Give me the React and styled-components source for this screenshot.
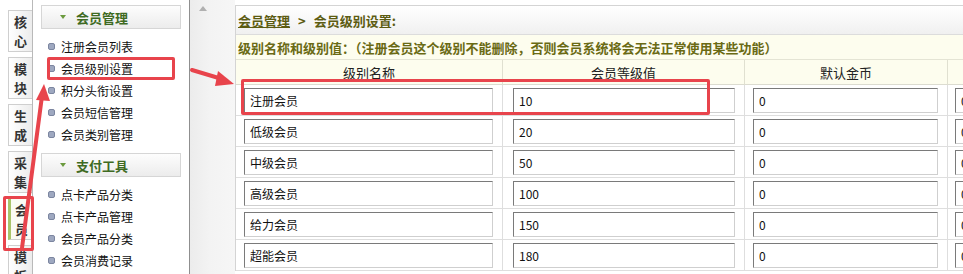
import React from 'react';
import styled, { createGlobalStyle } from 'styled-components';

const GlobalStyle = createGlobalStyle`
  html, body {
    margin: 0;
    padding: 0;
    background: #fff;
  }
  body {
    font-family: "Liberation Sans", "Noto Sans CJK SC", sans-serif;
    font-size: 12px;
    color: #000;
  }
`;

const Page = styled.div`
  position: relative;
  width: 963px;
  height: 274px;
  overflow: hidden;
  display: flex;
  background: #fff;
`;

const TabStrip = styled.div`
  width: 33px;
  flex: none;
  border-right: 1px solid #b9b9b9;
  padding: 10px 0 0 8px;
  box-sizing: border-box;
  display: flex;
  flex-direction: column;
  gap: 5px;
  background: #fff;
`;

const Tab = styled.div`
  position: relative;
  width: 24px;
  height: 42px;
  box-sizing: border-box;
  border: 1px solid #cfcfcf;
  border-right: none;
  background: ${p => (p.$active ? '#fbfbf4' : 'linear-gradient(to right, #fff, #ececec)')};
  border-left: ${p => (p.$active ? '3px solid #a9c46a' : '1px solid #cfcfcf')};
  display: flex;
  flex-direction: column;
  align-items: center;
  justify-content: center;
  font-family: "Noto Sans CJK SC", sans-serif;
  font-size: 13px;
  font-weight: bold;
  color: #333;
  flex: none;

  span {
    display: block;
    height: 19px;
    line-height: 19px;
  }
`;

const MenuPanel = styled.div`
  width: 157px;
  flex: none;
  border-right: 1px solid #8f8f8f;
  padding: 5px 0 0 8px;
  box-sizing: border-box;
`;

const GroupHeader = styled.div`
  width: 140px;
  height: 24px;
  box-sizing: border-box;
  border: 1px solid #d6d6d6;
  background: linear-gradient(to bottom, #fdfdfd, #ececec);
  display: flex;
  align-items: center;
  padding-left: 18px;
  gap: 10px;
  font-family: "Noto Sans CJK SC", sans-serif;
  font-size: 13px;
  font-weight: bold;
  color: #3e6a22;
  margin-bottom: 6px;
`;

const Caret = styled.span`
  width: 0;
  height: 0;
  border-left: 3px solid transparent;
  border-right: 3px solid transparent;
  border-top: 4px solid #6b9a3e;
`;

const MenuList = styled.div`
  display: flex;
  flex-direction: column;
  margin-bottom: 8px;
`;

const MenuItem = styled.div`
  height: 22px;
  display: flex;
  align-items: center;
  gap: 6px;
  padding-left: 7px;
  font-family: "Noto Sans CJK SC", sans-serif;
  font-size: 12px;
  color: #111;
`;

const Bullet = styled.span`
  width: 5px;
  height: 5px;
  border-radius: 2px;
  background: #9ea8c0;
  border: 1px solid #7c86a0;
`;

const Gutter = styled.div`
  width: 45px;
  flex: none;
  background: linear-gradient(to right, #ececec 0, #f3f3f3 20px, #f6f6f6 100%);
  padding: 6px 0 0 9px;
  box-sizing: border-box;
`;

const UpArrow = styled.div`
  width: 0;
  height: 0;
  border-left: 4px solid transparent;
  border-right: 4px solid transparent;
  border-bottom: 5px solid #b0b0b0;
`;

const Main = styled.div`
  flex: 1;
  padding-top: 5px;
  min-width: 0;
`;

const Box = styled.div`
  border-top: 1px solid #d4d4d4;
  border-left: 1px solid #d4d4d4;
  width: 900px;
`;

const Crumb = styled.div`
  height: 28px;
  display: flex;
  align-items: center;
  padding-left: 2px;
  gap: 8px;
  background: linear-gradient(to bottom, #ffffff, #f0f0f0);
  border-bottom: 1px solid #dcdcdc;
  font-family: "Noto Sans CJK SC", sans-serif;
  font-size: 13px;
  font-weight: bold;
  color: #5c5c12;
`;

const CrumbLink = styled.span`
  text-decoration: underline;
`;

const Notice = styled.div`
  height: 24px;
  display: flex;
  align-items: center;
  padding-left: 2px;
  background: #fdfdee;
  border-bottom: 1px solid #e4e4d4;
  font-family: "Noto Sans CJK SC", sans-serif;
  font-size: 13px;
  font-weight: bold;
  color: #6a6a14;
`;

const Grid = styled.div`
  display: grid;
  grid-template-columns: 267px 242px 203px 188px;
`;

const HeadCell = styled.div`
  height: 24px;
  background: #fdfdee;
  border-right: 1px solid #e0e0d0;
  border-bottom: 1px solid #dcdcd0;
  display: flex;
  align-items: center;
  justify-content: center;
  font-family: "Noto Sans CJK SC", sans-serif;
  font-size: 13px;
  color: #222;
`;

const Cell = styled.div`
  height: 31px;
  box-sizing: border-box;
  border-right: 1px solid #dedede;
  border-bottom: 1px solid #dedede;
  display: flex;
  align-items: center;
  padding-left: ${p => p.$pad}px;
`;

const Field = styled.input`
  width: ${p => p.$w}px;
  height: 25px;
  box-sizing: border-box;
  border: 1px solid #cfcfcf;
  border-top-color: #7a7a7a;
  border-left-color: #7a7a7a;
  padding: 0 5px;
  font-family: "Noto Sans CJK SC", "Liberation Sans", sans-serif;
  font-size: 12px;
  color: #111;
  background: #fff;
  outline: none;
`;

const Marker = styled.div`
  position: absolute;
  box-sizing: border-box;
  border: 3px solid #e8444c;
  border-radius: 2px;
  pointer-events: none;
`;

const Overlay = styled.svg`
  position: absolute;
  left: 0;
  top: 0;
  pointer-events: none;
`;

const tabs = [['核', '心'], ['模', '块'], ['生', '成'], ['采', '集'], ['会', '员'], ['模', '板']];
const memberMenu = ['注册会员列表', '会员级别设置', '积分头衔设置', '会员短信管理', '会员类别管理'];
const payMenu = ['点卡产品分类', '点卡产品管理', '会员产品分类', '会员消费记录'];
const levels = [
  ['注册会员', '10'],
  ['低级会员', '20'],
  ['中级会员', '50'],
  ['高级会员', '100'],
  ['给力会员', '150'],
  ['超能会员', '180'],
];

export default function App() {
  return (
    <>
      <GlobalStyle />
      <Page>
        <TabStrip>
          {tabs.map((t, i) => (
            <Tab key={i} $active={i === 4}>
              <span>{t[0]}</span>
              <span>{t[1]}</span>
            </Tab>
          ))}
        </TabStrip>

        <MenuPanel>
          <GroupHeader>
            <Caret />
            会员管理
          </GroupHeader>
          <MenuList>
            {memberMenu.map(m => (
              <MenuItem key={m}>
                <Bullet />
                {m}
              </MenuItem>
            ))}
          </MenuList>
          <GroupHeader>
            <Caret />
            支付工具
          </GroupHeader>
          <MenuList>
            {payMenu.map(m => (
              <MenuItem key={m}>
                <Bullet />
                {m}
              </MenuItem>
            ))}
          </MenuList>
        </MenuPanel>

        <Gutter>
          <UpArrow />
        </Gutter>

        <Main>
          <Box>
            <Crumb>
              <CrumbLink>会员管理</CrumbLink>
              <span>&gt;</span>
              <span>会员级别设置:</span>
            </Crumb>
            <Notice>级别名称和级别值：（注册会员这个级别不能删除，否则会员系统将会无法正常使用某些功能）</Notice>
            <Grid>
              <HeadCell>级别名称</HeadCell>
              <HeadCell>会员等级值</HeadCell>
              <HeadCell>默认金币</HeadCell>
              <HeadCell />
              {levels.map(([name, val]) => (
                <React.Fragment key={name}>
                  <Cell $pad={8}>
                    <Field $w={249} defaultValue={name} />
                  </Cell>
                  <Cell $pad={10}>
                    <Field $w={222} defaultValue={val} />
                  </Cell>
                  <Cell $pad={8}>
                    <Field $w={185} defaultValue="0" />
                  </Cell>
                  <Cell $pad={7}>
                    <Field $w={120} defaultValue="0" />
                  </Cell>
                </React.Fragment>
              ))}
            </Grid>
          </Box>
        </Main>

        <Marker style={{ left: 47, top: 57, width: 128, height: 23 }} />
        <Marker style={{ left: 3, top: 196, width: 31, height: 55 }} />
        <Marker style={{ left: 241, top: 79, width: 469, height: 36 }} />

        <Overlay width="963" height="274" viewBox="0 0 963 274">
          <line x1="22" y1="248" x2="42" y2="96" stroke="#e8444c" strokeWidth="4" strokeLinecap="round" />
          <polygon points="44,84 36,100 50,101" fill="#e8444c" />
          <line x1="192" y1="70" x2="222" y2="79" stroke="#e8444c" strokeWidth="4" strokeLinecap="round" />
          <polygon points="234,84 218,71 215,86" fill="#e8444c" />
        </Overlay>
      </Page>
    </>
  );
}
